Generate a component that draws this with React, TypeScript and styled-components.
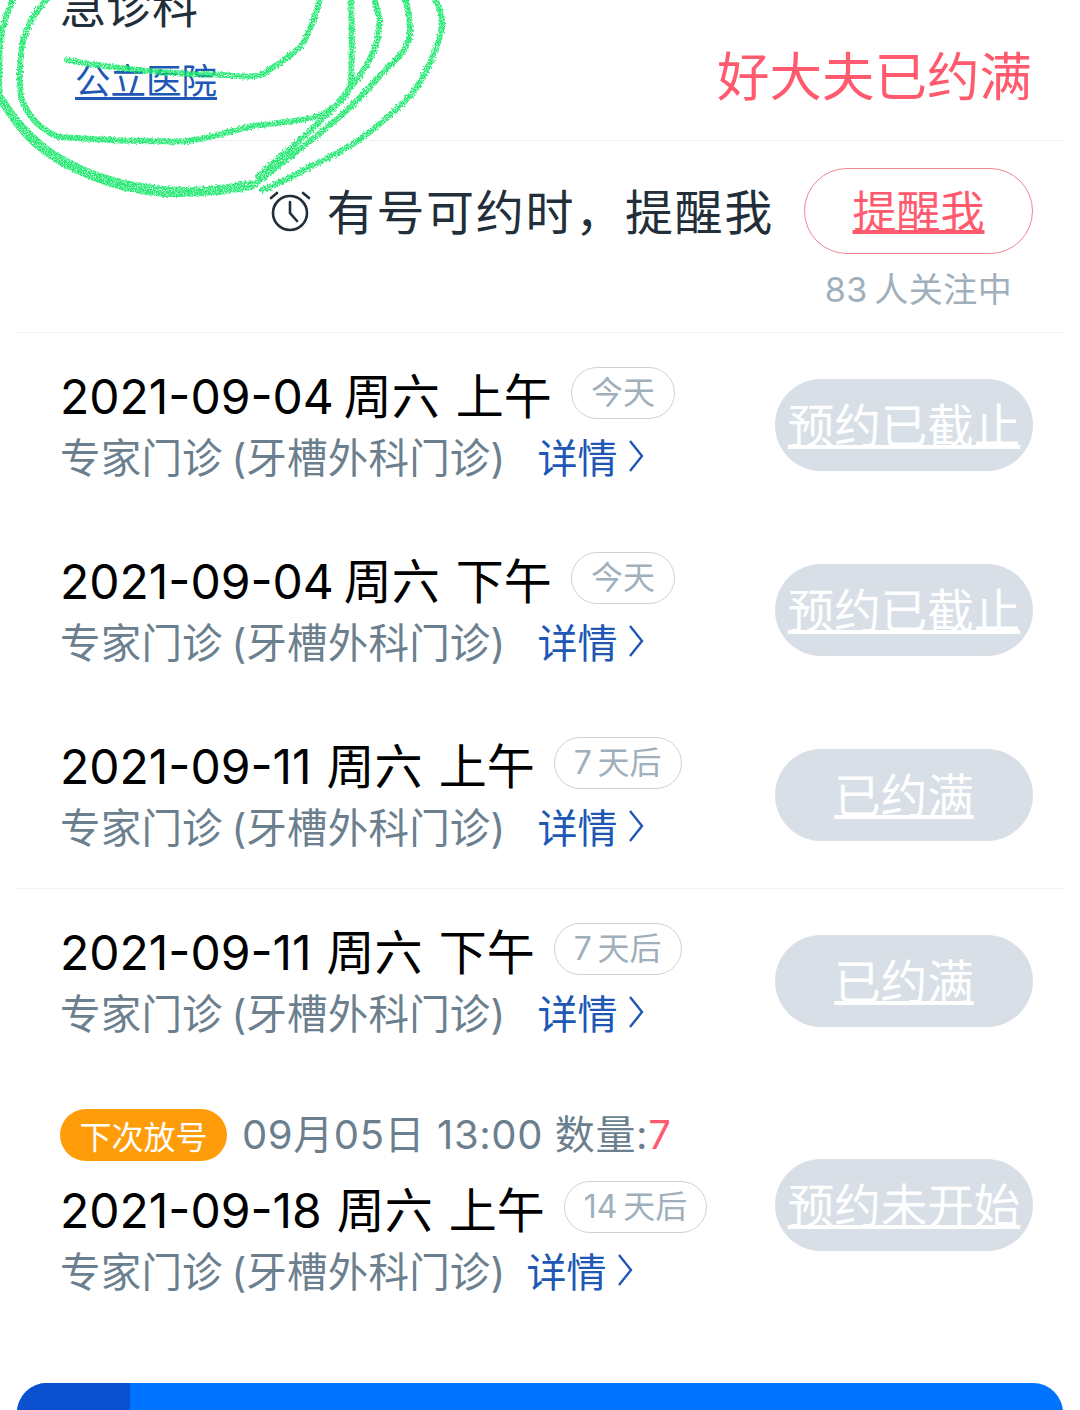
import React from "react";
import styled, { createGlobalStyle } from "styled-components";

const GlobalStyle = createGlobalStyle`
  html, body {
    margin: 0;
    padding: 0;
    background: #ffffff;
    overflow: hidden;
  }
  body {
    font-family: Inter, "Noto Sans CJK SC", sans-serif;
  }
`;

const Page = styled.div`
  position: relative;
  width: 1080px;
  height: 1410px;
  overflow: hidden;
  padding: 0 17px;
  box-sizing: border-box;
`;

const Scribble = styled.svg`
  position: absolute;
  left: 0;
  top: 0;
  pointer-events: none;
`;

const HeaderRow = styled.div`
  display: flex;
  justify-content: space-between;
  align-items: flex-end;
  height: 140px;
  padding: 0 31px 0 45px;
  border-bottom: 1px solid #eef2f6;
`;

const DeptBlock = styled.div`
  display: flex;
  flex-direction: column;
  align-items: flex-start;
  margin-bottom: 36px;
`;

const DeptName = styled.div`
  font-size: 46px;
  line-height: 50px;
  margin-left: -2px;
  color: #222f3a;
  margin-bottom: 29px;
`;

const HospitalLink = styled.a`
  font-size: 35.5px;
  line-height: 44px;
  margin-left: 13px;
  color: #2057b5;
  text-decoration: underline;
  text-underline-offset: 3px;
`;

const FullText = styled.div`
  font-size: 52.5px;
  line-height: 70px;
  color: #ff5a6e;
  margin-bottom: 28px;
`;

const RemindSection = styled.div`
  display: flex;
  flex-direction: column;
  align-items: flex-end;
  height: 192px;
  padding: 27px 30px 0 0;
  box-sizing: border-box;
  border-bottom: 1px solid #eef2f6;
`;

const RemindRow = styled.div`
  display: flex;
  align-items: center;
`;

const RemindText = styled.div`
  font-size: 48px;
  letter-spacing: 1.7px;
  line-height: 60px;
  color: #222f3a;
  margin: 3px 30px 0 16px;
`;

const RemindButton = styled.div`
  width: 229px;
  height: 86px;
  box-sizing: border-box;
  padding-bottom: 4px;
  border: 1.5px solid #ee8593;
  border-radius: 43px;
  display: flex;
  align-items: center;
  justify-content: center;
  font-size: 44px;
  color: #ff5a6e;
  text-decoration: underline;
  text-underline-offset: 2px;
`;

const Followers = styled.div`
  width: 229px;
  text-align: center;
  font-size: 34px;
  letter-spacing: 0.5px;
  line-height: 50px;
  margin-top: 11px;
  color: #9fb0bc;
`;

const ScheduleRow = styled.div<{ $divider?: boolean; $tall?: boolean }>`
  display: flex;
  justify-content: space-between;
  align-items: center;
  height: ${(p) => (p.$tall ? 260 : 185.33)}px;
  box-sizing: border-box;
  padding: ${(p) => (p.$tall ? "1px 30px 0 43px" : "0 30px 2px 43px")};
  border-bottom: ${(p) => (p.$divider ? "1px solid #eef2f6" : "none")};
`;

const SlotInfo = styled.div`
  display: flex;
  flex-direction: column;
  align-items: flex-start;
`;

const NextRelease = styled.div`
  display: flex;
  align-items: center;
  height: 52px;
  margin-bottom: 16px;
  font-size: 40px;
  letter-spacing: 0.6px;
  color: #6b7f8e;
  white-space: pre;
`;

const ReleaseBadge = styled.span`
  display: inline-flex;
  align-items: center;
  justify-content: center;
  width: 167px;
  height: 52px;
  margin-right: 15px;
  border-radius: 26px;
  background: #ff9c0a;
  color: #ffffff;
  font-size: 32px;
  letter-spacing: 0;
`;

const ReleaseText = styled.span`
  padding-bottom: 5px;
`;

const ReleaseCount = styled.span`
  color: #ff5a6e;
`;

const SlotTitle = styled.div`
  display: flex;
  align-items: center;
  height: 62px;
  box-sizing: border-box;
  padding-bottom: 2px;
  font-size: 48px;
  color: #000000;
  white-space: pre;
`;

const DateText = styled.span<{ $gap: number }>`
  margin-right: ${(p) => p.$gap}px;
`;

const PeriodText = styled.span`
  margin-left: 16px;
`;

const DayTag = styled.span`
  display: inline-flex;
  align-items: center;
  justify-content: center;
  height: 52px;
  padding: 0 19px 5px;
  margin-left: 19px;
  box-sizing: border-box;
  border: 1px solid #c9d4dc;
  border-radius: 26px;
  font-size: 32px;
  color: #9fb0bc;
`;

const SlotSub = styled.div`
  display: flex;
  align-items: center;
  height: 62px;
  font-size: 40.5px;
  letter-spacing: 0.2px;
  word-spacing: -3px;
  color: #6b7f8e;
  white-space: pre;
`;

const DetailLink = styled.span<{ $gap: number }>`
  display: inline-flex;
  align-items: center;
  margin-left: ${(p) => p.$gap}px;
  font-size: 40px;
  letter-spacing: 0;
  color: #2057b5;
`;

const Chevron = styled.svg`
  margin-left: 10px;
`;

const StatusButton = styled.div`
  flex: none;
  width: 258px;
  height: 92px;
  box-sizing: border-box;
  padding-bottom: 5px;
  border-radius: 46px;
  background: #d8dfe6;
  display: flex;
  align-items: center;
  justify-content: center;
  color: #ffffff;
  font-size: 46.5px;
  white-space: nowrap;
  text-decoration: underline;
  text-underline-offset: 2px;
`;

const BottomBar = styled.div`
  display: flex;
  height: 80px;
  margin-top: 49px;
  border-radius: 30px 30px 0 0;
  overflow: hidden;
  background: #0073ff;
`;

const BottomBarLeft = styled.div`
  width: 113px;
  background: #0a50cf;
`;

const slots = [
  { date: "2021-09-04", gap: 10, period: "上午", tag: "今天", status: "预约已截止" },
  { date: "2021-09-04", gap: 10, period: "下午", tag: "今天", status: "预约已截止" },
  { date: "2021-09-11", gap: 15, period: "上午", tag: "7\u2009天后", status: "已约满", divider: true },
  { date: "2021-09-11", gap: 15, period: "下午", tag: "7\u2009天后", status: "已约满" },
];

const AlarmIcon = () => (
  <svg width="42" height="44" viewBox="0 0 42 44" fill="none" stroke="#222f3a" strokeWidth="2.6" strokeLinecap="round">
    <circle cx="21" cy="24" r="17" />
    <path d="M21 13v11l7 8" />
    <path d="M2 9 8 4M40 9l-6-5" />
  </svg>
);

const Detail = ({ gap }: { gap: number }) => (
  <DetailLink $gap={gap}>
    详情
    <Chevron width="16" height="34" viewBox="0 0 16 34" fill="none" stroke="#2057b5" strokeWidth="2.4">
      <path d="M2 2 14 17 2 32" />
    </Chevron>
  </DetailLink>
);

const App: React.FC = () => {
  return (
    <>
      <GlobalStyle />
      <Page>
        <HeaderRow>
          <DeptBlock>
            <DeptName>急诊科</DeptName>
            <HospitalLink>公立医院</HospitalLink>
          </DeptBlock>
          <FullText>好大夫已约满</FullText>
        </HeaderRow>

        <RemindSection>
          <RemindRow>
            <AlarmIcon />
            <RemindText>{"有号可约时\uFF0C提醒我"}</RemindText>
            <RemindButton>提醒我</RemindButton>
          </RemindRow>
          <Followers>{"83\u2009人关注中"}</Followers>
        </RemindSection>

        {slots.map((slot, i) => (
          <ScheduleRow key={i} $divider={slot.divider}>
            <SlotInfo>
              <SlotTitle>
                <span>
                  <DateText $gap={slot.gap}>{slot.date}</DateText>
                  周六
                  <PeriodText>{slot.period}</PeriodText>
                </span>
                <DayTag>{slot.tag}</DayTag>
              </SlotTitle>
              <SlotSub>
                专家门诊 (牙槽外科门诊)
                <Detail gap={32} />
              </SlotSub>
            </SlotInfo>
            <StatusButton>{slot.status}</StatusButton>
          </ScheduleRow>
        ))}

        <ScheduleRow $tall>
          <SlotInfo>
            <NextRelease>
              <ReleaseBadge>下次放号</ReleaseBadge>
              <ReleaseText>
                09月05日 13:00 数量:<ReleaseCount>7</ReleaseCount>
              </ReleaseText>
            </NextRelease>
            <SlotTitle>
              <span>
                <DateText $gap={15}>2021-09-18</DateText>
                周六
                <PeriodText>上午</PeriodText>
              </span>
              <DayTag>{"14\u2009天后"}</DayTag>
            </SlotTitle>
            <SlotSub>
              专家门诊 (牙槽外科门诊)
              <Detail gap={21} />
            </SlotSub>
          </SlotInfo>
          <StatusButton>预约未开始</StatusButton>
        </ScheduleRow>

        <BottomBar>
          <BottomBarLeft />
        </BottomBar>

        <Scribble width="460" height="215" viewBox="0 0 460 215" fill="none" stroke="#1be96d" strokeLinecap="round" strokeLinejoin="round">
          <defs>
            <filter id="crayon" x="-5%" y="-5%" width="110%" height="110%">
              <feTurbulence type="fractalNoise" baseFrequency="0.45" numOctaves="2" seed="3" result="noise" />
              <feDisplacementMap in="SourceGraphic" in2="noise" scale="4" result="shifted" />
              <feTurbulence type="fractalNoise" baseFrequency="0.9" numOctaves="2" seed="8" result="grain" />
              <feColorMatrix in="grain" type="matrix" values="0 0 0 0 0  0 0 0 0 0  0 0 0 0 0  0 0 0 -3 2.4" result="mask" />
              <feComposite in="shifted" in2="mask" operator="in" />
              <feGaussianBlur stdDeviation="0.6" />
            </filter>
          </defs>
          <g filter="url(#crayon)" opacity="0.95" strokeWidth="6" transform="scale(1 0.97)">
            <path d="M67 62C90 66 115 70 138 72 165 75 195 77 220 77 240 79 252 80 262 77 280 65 295 55 303 45 310 32 316 15 320-2" />
            <path d="M48-2C32 15 22 35 21 58 19 72 20 88 21 100 28 122 42 134 58 141 95 144 140 146 182 146 205 144 228 136 248 131 275 126 300 126 320 119 338 110 348 100 351 86 352 60 352 25 351-2" />
            <path d="M258 182C270 170 282 160 293 151 315 130 335 112 348 93 366 72 382 45 379 17L374-2" />
            <path d="M14-2C7 12 2 28 0 45-1 65-1 85 0 103 10 120 22 136 34 148 52 164 70 174 90 182 115 193 140 198 165 200 195 201 225 198 251 193 270 178 285 165 303 151 330 130 358 105 379 79 395 62 410 50 410 34 410 20 408 8 405-2" />
            <path d="M434-2C440 8 443 18 442 28 438 50 426 76 413 96 395 115 376 132 358 145 342 156 326 164 310 172 294 181 278 190 262 196" />
            <path d="M0 100C14 124 32 146 58 162 86 180 120 192 165 196 190 198 220 196 250 190" strokeWidth="8" />
          </g>
        </Scribble>
      </Page>
    </>
  );
};

export default App;
